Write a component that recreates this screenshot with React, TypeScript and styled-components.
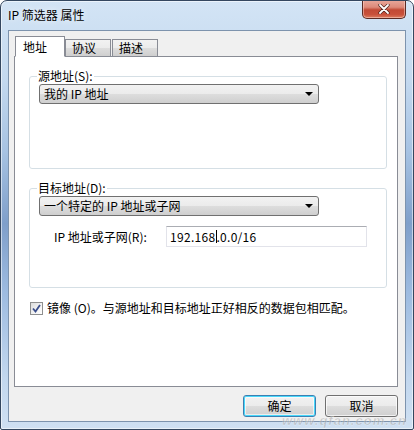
import React from 'react'
import styled, { createGlobalStyle } from 'styled-components';

const FONT = `"Noto Sans CJK SC", "Liberation Sans", sans-serif`;

const GlobalStyle = createGlobalStyle`
    html, body {
        margin: 0;
        padding: 0;
        background: #ffffff;
    }
    body {
        font-family: ${FONT};
        font-size: 12px;
        color: #000000;
    }
`;

const Window = styled.div`
    position: relative;
    width: 414px;
    height: 430px;
    box-sizing: border-box;
    display: flex;
    flex-direction: column;
    padding: 0 7px 7px 7px;
    border: 1px solid #34475f;
    border-radius: 7px 7px 2px 2px;
    background: linear-gradient(180deg, #d3e4f5 0%, #c4d9ef 18%, #a7c3e3 35%, #7f9fca 52%, #9dbbe0 68%, #c2d7ee 88%, #cfe0f2 100%);
    box-shadow: inset 0 0 0 1px rgba(255, 255, 255, 0.55);
    overflow: hidden;
`;

const TitleBar = styled.div`
    height: 29px;
    display: flex;
    justify-content: space-between;
    align-items: flex-start;
`;

const Title = styled.div`
    padding-top: 6px;
    font-size: 12px;
    line-height: 16px;
    color: #000;
    text-shadow: 0 0 6px rgba(255, 255, 255, 0.9);
`;

const CloseButton = styled.div`
    width: 44px;
    height: 19px;
    margin-top: -1px;
    box-sizing: border-box;
    display: flex;
    align-items: center;
    justify-content: center;
    border: 1px solid #5b2b24;
    border-top: none;
    border-radius: 0 0 5px 5px;
    background: linear-gradient(180deg, #e9a99c 0%, #dd8a7a 40%, #c24a35 55%, #c8503a 80%, #dc7c5f 100%);
    box-shadow: inset 0 0 0 1px rgba(255, 220, 210, 0.5);
`;

const Client = styled.div`
    flex: 1;
    display: flex;
    flex-direction: column;
    padding: 5px 0 4px 0;
    background: #f0f0f0;
    border: 1px solid #7d93ad;
`;

const TabStrip = styled.div`
    display: flex;
    align-items: flex-end;
    margin-left: 6px;
    height: 21px;
    margin-bottom: -1px;
    position: relative;
    z-index: 1;
`;

const Tab = styled.div<{ active?: boolean }>`
    box-sizing: border-box;
    height: ${p => p.active ? '21px' : '18px'};
    width: ${p => p.active ? '50px' : '46px'};
    margin-right: ${p => p.active ? '0' : '1px'};
    padding: ${p => p.active ? '2px 0 0 7px' : '0 0 0 6px'};
    border: 1px solid #898c95;
    border-bottom: ${p => p.active ? '1px solid #ffffff' : '1px solid #898c95'};
    background: ${p => p.active ? '#ffffff' : 'linear-gradient(180deg, #f2f2f2 0%, #ebebeb 50%, #dddddd 51%, #cfcfcf 100%)'};
    font-size: 12px;
    line-height: 16px;
`;

const Panel = styled.div`
    flex: 1;
    margin: 0 7px 0 5px;
    padding: 12px 10px 0 14px;
    background: #ffffff;
    border: 1px solid #898c95;
    display: flex;
    flex-direction: column;
`;

const Group = styled.fieldset<{ fill: number }>`
    margin: 0;
    padding: 0 0 ${p => p.fill}px 9px;
    border: 1px solid #d5dfe5;
    border-radius: 3px;
    min-width: 0;
`;

const Legend = styled.legend`
    margin-left: -2px;
    padding: 0 1px;
    font-size: 12px;
    line-height: 14px;
`;

const Select = styled.div`
    box-sizing: border-box;
    width: 280px;
    height: 20px;
    margin-top: 1px;
    padding: 0 0 0 4px;
    display: flex;
    align-items: center;
    justify-content: space-between;
    border: 1px solid #707070;
    border-radius: 3px;
    background: linear-gradient(180deg, #f2f2f2 0%, #ebebeb 50%, #dddddd 51%, #cfcfcf 100%);
    font-size: 12px;
    line-height: 16px;
    white-space: pre;
`;

const Arrow = styled.div`
    width: 0;
    height: 0;
    margin-right: 5px;
    border-left: 4px solid transparent;
    border-right: 4px solid transparent;
    border-top: 4px solid #000;
`;

const FieldRow = styled.div`
    display: flex;
    align-items: center;
    margin-top: 10px;
    padding-left: 15px;
`;

const FieldLabel = styled.div`
    width: 112px;
    font-size: 12px;
    line-height: 16px;
    white-space: pre;
`;

const TextBox = styled.div`
    position: relative;
    box-sizing: border-box;
    width: 201px;
    height: 21px;
    padding-left: 3px;
    display: flex;
    align-items: center;
    border: 1px solid #e2e3ea;
    border-top-color: #abadb3;
    background: #ffffff;
    font-size: 12px;
    white-space: pre;
    letter-spacing: 0.3px;
`;

const Caret = styled.span`
    display: inline-block;
    width: 1px;
    height: 13px;
    margin: 0 -1px 0 1px;
    background: #000;
    vertical-align: middle;
`;

const CheckRow = styled.label`
    display: flex;
    align-items: center;
    gap: 4px;
    margin-top: 12px;
    padding-left: 1px;
    font-size: 12px;
    line-height: 16px;
    white-space: pre;
`;

const CheckBox = styled.div`
    box-sizing: border-box;
    width: 13px;
    height: 13px;
    border: 1px solid #8e8f8f;
    background: linear-gradient(135deg, #dcdcdc 0%, #f4f4f4 60%, #ffffff 100%);
    display: flex;
    align-items: center;
    justify-content: center;
`;

const ButtonRow = styled.div`
    display: flex;
    justify-content: flex-end;
    gap: 9px;
    margin: 0 7px 0 5px;
    padding-top: 8px;
`;

const Button = styled.div<{ primary?: boolean }>`
    box-sizing: border-box;
    width: 73px;
    height: 22px;
    display: flex;
    align-items: center;
    justify-content: center;
    border: 1px solid ${p => p.primary ? '#3c7fb1' : '#707070'};
    border-radius: 3px;
    background: linear-gradient(180deg, #f2f2f2 0%, #ebebeb 50%, #dddddd 51%, #cfcfcf 100%);
    box-shadow: ${p => p.primary ? 'inset 0 0 0 1px #48d8fb, inset 0 0 0 2px rgba(255,255,255,0.6)' : 'inset 0 0 0 1px rgba(255,255,255,0.7)'};
    font-size: 12px;
    line-height: 16px;
`;

const Watermark = styled.div`
    position: absolute;
    right: 6px;
    bottom: 2px;
    font-family: "Liberation Sans", sans-serif;
    font-size: 13px;
    line-height: 13px;
    font-weight: bold;
    font-style: italic;
    letter-spacing: 1px;
    color: rgba(150, 150, 150, 0.45);
    -webkit-text-stroke: 0.4px rgba(255, 255, 255, 0.6);
    pointer-events: none;
`;

export default function App() {
    return (
        <>
            <GlobalStyle />
            <Window>
                <TitleBar>
                    <Title>IP 筛选器 属性</Title>
                    <CloseButton>
                        <svg width="12" height="10" viewBox="0 0 12 10">
                            <path d="M2 1 L10 9 M10 1 L2 9" stroke="#4a1f18" strokeWidth="3.2" strokeLinecap="round" />
                            <path d="M2 1 L10 9 M10 1 L2 9" stroke="#ffffff" strokeWidth="1.8" strokeLinecap="round" />
                        </svg>
                    </CloseButton>
                </TitleBar>
                <Client>
                    <TabStrip>
                        <Tab active>地址</Tab>
                        <Tab>协议</Tab>
                        <Tab>描述</Tab>
                    </TabStrip>
                    <Panel>
                        <Group fill={64}>
                            <Legend>源地址(S):</Legend>
                            <Select>我的 IP 地址<Arrow /></Select>
                        </Group>
                        <Group fill={40} style={{ marginTop: 12 }}>
                            <Legend>目标地址(D):</Legend>
                            <Select>一个特定的 IP 地址或子网<Arrow /></Select>
                            <FieldRow>
                                <FieldLabel>IP 地址或子网(R):</FieldLabel>
                                <TextBox>192.168<Caret />.0.0/16</TextBox>
                            </FieldRow>
                        </Group>
                        <CheckRow>
                            <CheckBox>
                                <svg width="9" height="9" viewBox="0 0 9 9">
                                    <path d="M1 4.5 L3.5 7.5 L8 1" fill="none" stroke="#3b4e8c" strokeWidth="1.8" />
                                </svg>
                            </CheckBox>
                            镜像 (O)。与源地址和目标地址正好相反的数据包相匹配。
                        </CheckRow>
                    </Panel>
                    <ButtonRow>
                        <Button primary>确定</Button>
                        <Button>取消</Button>
                    </ButtonRow>
                </Client>
                <Watermark>www.qfan.com.cn</Watermark>
            </Window>
        </>
    )
}
